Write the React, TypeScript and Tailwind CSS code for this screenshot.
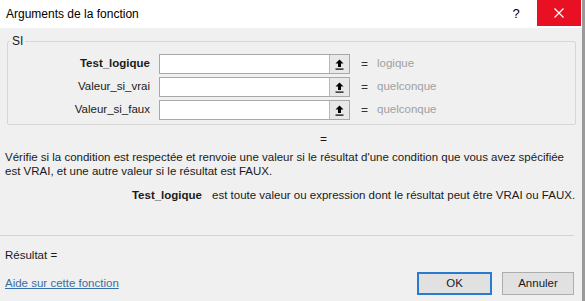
import React from "react";

const font = { fontFamily: '"Liberation Sans", Arial, sans-serif' };

function Arrow() {
  return (
    <svg width="9" height="11" viewBox="0 0 9 11">
      <path d="M4.5 0.5 L8.5 4.5 L6 4.5 L6 8 L3 8 L3 4.5 L0.5 4.5 Z" fill="#000" />
      <rect x="0.5" y="9.5" width="8" height="1.2" fill="#000" />
    </svg>
  );
}

function Row({ label, bold, value }: { label: string; bold?: boolean; value: string }) {
  return (
    <div className="flex items-center h-[20px]">
      <div className={`w-[151px] pr-[9px] text-right text-[11.5px] text-[#1a1a1a] ${bold ? "font-bold" : ""}`}>{label}</div>
      <div className="flex h-[20px] w-[191px] border border-[#a8a8a8] bg-white">
        <div className="flex-1" />
        <div className="w-[20px] h-full flex items-center justify-center bg-[#e8e8e8] border-l border-[#b8b8b8]">
          <Arrow />
        </div>
      </div>
      <div className="ml-[11px] text-[12px] text-[#333]">=</div>
      <div className="ml-[9px] text-[11.5px] text-[#a0a0a0]">{value}</div>
    </div>
  );
}

export default function App() {
  return (
    <div className="w-[585px] h-[301px] bg-[#f0f0f0] flex flex-col relative overflow-hidden" style={font}>
      <div className="h-[28px] bg-white flex items-center shrink-0">
        <div className="pl-[6px] text-[12px] text-black flex-1">Arguments de la fonction</div>
        <div className="text-[13px] text-black w-[30px] mr-[6px] text-center">?</div>
        <div className="w-[44px] h-[26px] bg-[#e81123] flex items-center justify-center self-start">
          <svg width="10" height="10" viewBox="0 0 10 10">
            <path d="M0.5 0.5 L9.5 9.5 M9.5 0.5 L0.5 9.5" stroke="#fff" strokeWidth="1.2" />
          </svg>
        </div>
        <div className="w-[1px]" />
        <div className="w-[3px] self-stretch bg-[#9a9a9a]" />
      </div>
      <div className="flex-1 flex border-r-[3px] border-[#9a9a9a]">
        <div className="flex-1 flex flex-col">
          <div className="relative mt-[13px] ml-[7px] mr-[6px] h-[84px] border border-[#d6d6d6] rounded-[2px]">
            <div className="absolute -top-[9px] left-[2px] px-[2px] bg-[#f0f0f0] text-[12px] text-[#1a1a1a] leading-[16px]">SI</div>
            <div className="flex flex-col gap-[3px] pt-[12px]">
              <Row label="Test_logique" bold value="logique" />
              <Row label="Valeur_si_vrai" value="quelconque" />
              <Row label="Valeur_si_faux" value="quelconque" />
            </div>
          </div>
          <div className="pl-[320px] mt-[6px] text-[12px] leading-[16px] text-[#1a1a1a]">=</div>
          <div className="pl-[5px] mt-[3px] text-[11.5px] leading-[14px] text-[#1a1a1a] whitespace-nowrap">
            Vérifie si la condition est respectée et renvoie une valeur si le résultat d'une condition que vous avez spécifiée
            <br />
            est VRAI, et une autre valeur si le résultat est FAUX.
          </div>
          <div className="flex mt-[9px] text-[11.5px] leading-[16px] text-[#1a1a1a] whitespace-nowrap">
            <div className="w-[202px] text-right font-bold">Test_logique</div>
            <div className="ml-[10px]">est toute valeur ou expression dont le résultat peut être VRAI ou FAUX.</div>
          </div>
          <div className="mt-[32px] mr-[8px] h-px bg-[#d4d4d4]" />
          <div className="pl-[5px] mt-[11px] text-[11.5px] leading-[16px] text-[#1a1a1a]">Résultat =</div>
          <div className="flex items-center mt-[9px]">
            <div className="pl-[5px] text-[11.5px] text-[#3a6ea5] underline flex-1">Aide sur cette fonction</div>
            <div className="w-[75px] h-[23px] border-2 border-[#2a7bd0] bg-[#e1e1e1] text-[11.5px] flex items-center justify-center text-[#1a1a1a]">OK</div>
            <div className="ml-[10px] mr-[8px] w-[72px] h-[23px] border border-[#adadad] bg-[#e1e1e1] text-[11.5px] flex items-center justify-center text-[#1a1a1a]">Annuler</div>
          </div>
        </div>
      </div>
    </div>
  );
}
